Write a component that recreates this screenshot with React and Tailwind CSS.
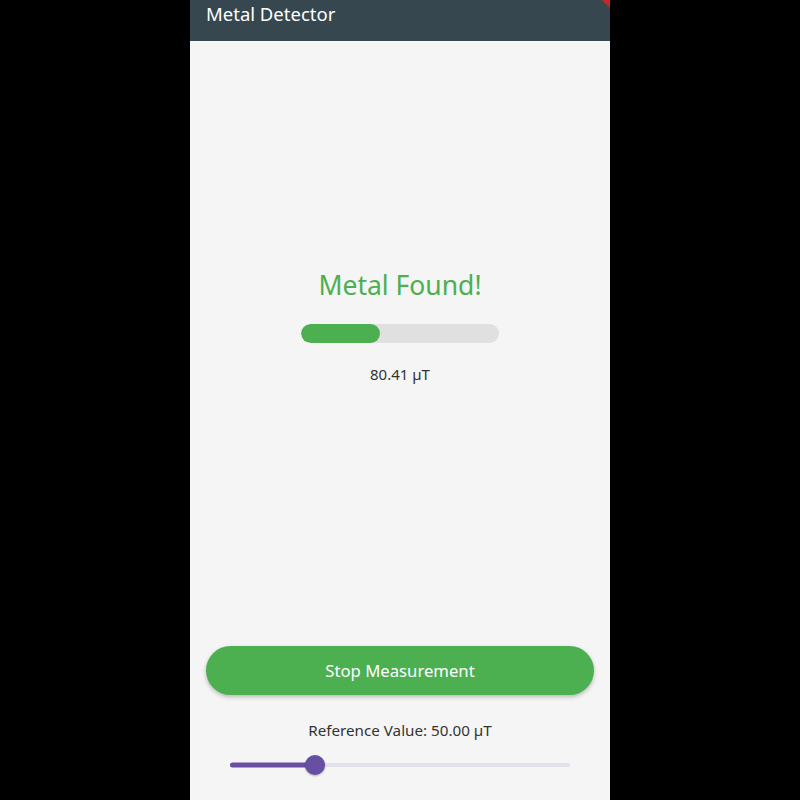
export default function App() {
  const font = { fontFamily: '"Noto Sans", "Open Sans", sans-serif' };
  return (
    <div className="w-full h-[800px] bg-black flex justify-center" style={font}>
      <div className="w-[420px] h-full flex flex-col bg-[#f5f5f5] relative overflow-hidden">
        <div className="h-[41px] bg-[#37474f] flex items-center px-4 shrink-0">
          <span className="text-white text-[18.5px] leading-none -mt-[12px]">Metal Detector</span>
        </div>
        <div className="absolute top-[-6px] right-[-18px] w-[40px] h-[10px] bg-[#c62828] rotate-45"></div>
        <div className="flex-1 flex flex-col items-center pt-[226px]">
          <div className="text-[#4caf50] text-[26.5px] leading-[36px]">Metal Found!</div>
          <div className="mt-[21px] w-[198px] h-[19px] rounded-full bg-[#e0e0e0] overflow-hidden">
            <div className="h-full w-[40%] bg-[#4caf50] rounded-full"></div>
          </div>
          <div className="mt-[19px] text-[15px] leading-[24px] text-[#333]">80.41 µT</div>
        </div>
        <div className="flex flex-col items-center pb-[25px]">
          <button className="w-[388px] h-[49px] rounded-full bg-[#4caf50] text-white text-[16.7px] shadow-[0_2px_4px_rgba(0,0,0,0.25)]">
            Stop Measurement
          </button>
          <div className="mt-[23px] text-[15.2px] leading-[24px] text-[#333]">Reference Value: 50.00 µT</div>
          <div className="mt-[13px] w-[340px] h-[20px] relative flex items-center">
            <div className="w-full h-[4px] rounded-full bg-[#e4e1ea]"></div>
            <div className="absolute left-0 top-1/2 -translate-y-1/2 h-[5px] w-[85px] rounded-full bg-[#6750a4]"></div>
            <div className="absolute left-[75px] top-0 w-[20px] h-[20px] rounded-full bg-[#6750a4] shadow-[0_1px_2px_rgba(0,0,0,0.3)]"></div>
          </div>
        </div>
      </div>
    </div>
  );
}
